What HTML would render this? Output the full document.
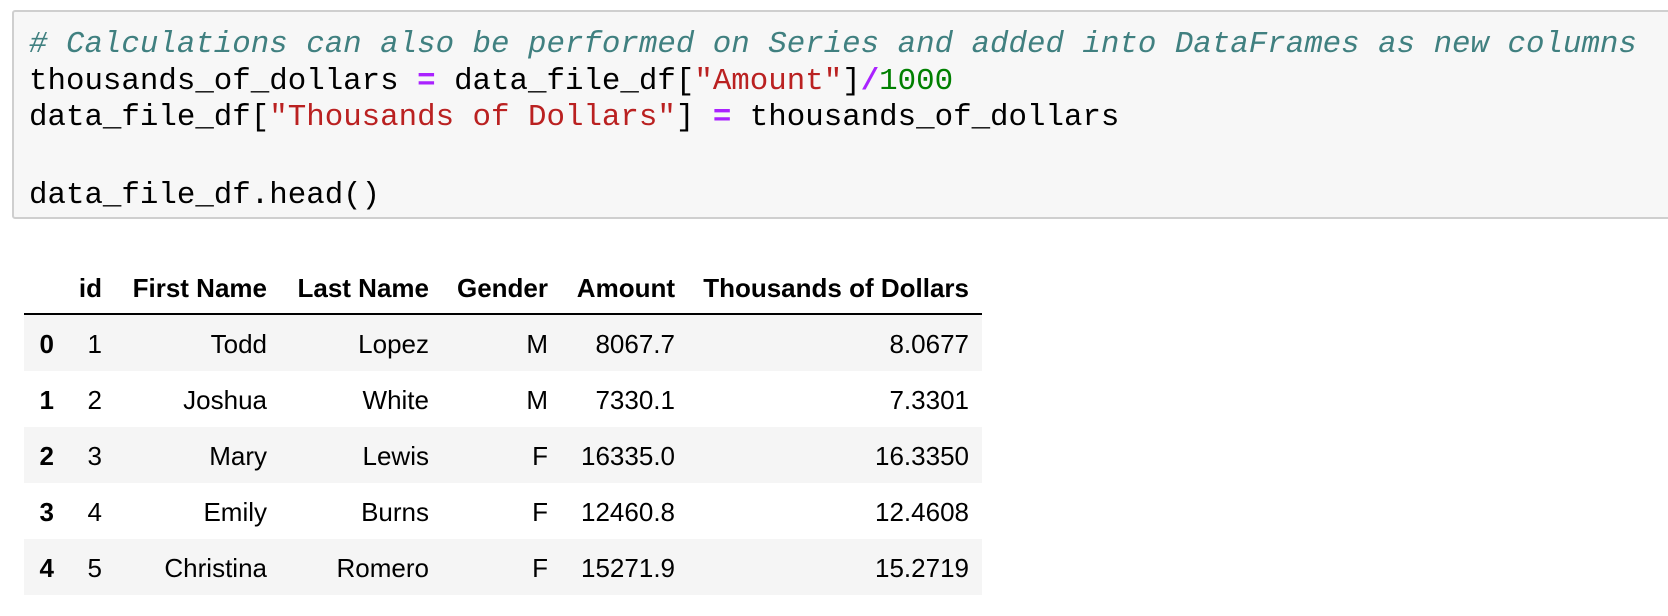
<!DOCTYPE html>
<html><head><meta charset="utf-8"><style>
html,body{margin:0;padding:0;background:#fff;width:1668px;height:616px;overflow:hidden;position:relative}
.code{position:absolute;left:12px;top:10px;width:1670px;height:209px;background:#f7f7f7;border:2px solid #cfcfcf;border-radius:3px;box-sizing:border-box}
.ln{position:absolute;left:29px;font-family:"Liberation Mono",monospace;font-size:30.8px;white-space:pre;color:#000;line-height:36px}
.c{color:#408080;font-style:italic}.s{color:#BA2121}.o{color:#AA22FF;font-weight:bold}.n{color:#008000}
.t{position:absolute;font-family:"Liberation Sans",sans-serif;font-size:26px;white-space:nowrap;line-height:30px;text-align:right}
.b{font-weight:bold}
.row{position:absolute;left:24px;width:958px;height:56px}
</style></head><body>
<div class="code"></div>
<div class="ln c" style="top:27px"># Calculations can also be performed on Series and added into DataFrames as new columns</div>
<div class="ln" style="top:64px">thousands_of_dollars <span class="o">=</span> data_file_df[<span class="s">"Amount"</span>]<span class="o">/</span><span class="n">1000</span></div>
<div class="ln" style="top:100px">data_file_df[<span class="s">"Thousands of Dollars"</span>] <span class="o">=</span> thousands_of_dollars</div>
<div class="ln" style="top:178px">data_file_df.head()</div>

<div class="row" style="top:313px;height:2px;background:#000"></div>
<div class="row" style="top:315px;background:#f5f5f5"></div>
<div class="row" style="top:427px;background:#f5f5f5"></div>
<div class="row" style="top:539px;background:#f5f5f5"></div>

<div id="tb"></div>
<script>
var cols=[54,102,267,429,548,675,969];
var rows=[["","id","First Name","Last Name","Gender","Amount","Thousands of Dollars"],
["0","1","Todd","Lopez","M","8067.7","8.0677"],
["1","2","Joshua","White","M","7330.1","7.3301"],
["2","3","Mary","Lewis","F","16335.0","16.3350"],
["3","4","Emily","Burns","F","12460.8","12.4608"],
["4","5","Christina","Romero","F","15271.9","15.2719"]];
var h="";
var ys=[288,344,400,456,512,568];
for(var r=0;r<rows.length;r++)for(var c=0;c<7;c++){
 var bold=(r==0||c==0)?" b":"";
 h+='<div class="t'+bold+'" style="top:'+(ys[r]-15)+'px;right:'+(1668-cols[c])+'px">'+rows[r][c]+'</div>';
}
document.getElementById("tb").innerHTML=h;
</script>
</body></html>
